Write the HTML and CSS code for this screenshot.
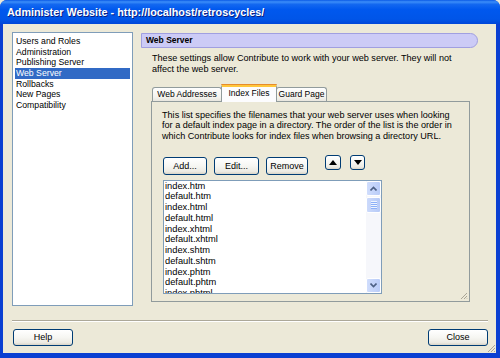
FILE: index.html
```html
<!DOCTYPE html>
<html>
<head>
<meta charset="utf-8">
<title>Administer Website</title>
<link rel="stylesheet" href="styles.css">
</head>
<body>
<div class="window">
  <div class="titlebar"><span class="title">Administer Website - http://localhost/retroscycles/</span></div>
  <div class="client">
    <div class="main">
      <ul class="categories">
        <li>Users and Roles</li>
        <li>Administration</li>
        <li>Publishing Server</li>
        <li class="selected">Web Server</li>
        <li>Rollbacks</li>
        <li>New Pages</li>
        <li>Compatibility</li>
      </ul>
      <div class="content">
        <div class="section-header">Web Server</div>
        <p class="desc">These settings allow Contribute to work with your web server. They will not<br>affect the web server.</p>
        <div class="tabs">
          <div class="tab tab-web">Web Addresses</div>
          <div class="tab tab-index active">Index Files</div>
          <div class="tab tab-guard">Guard Page</div>
        </div>
        <div class="tab-panel">
          <p class="panel-text">This list specifies the filenames that your web server uses when looking<br>for a default index page in a directory. The order of the list is the order in<br>which Contribute looks for index files when browsing a directory URL.</p>
          <div class="toolbar">
            <button class="btn btn-add">Add...</button>
            <button class="btn btn-edit">Edit...</button>
            <button class="btn btn-remove">Remove</button>
            <button class="btn arrow arrow-up" aria-label="Move up"><svg width="8" height="5" viewBox="0 0 8 5"><path d="M0 5 L4 0 L8 5 Z" fill="#000"/></svg></button>
            <button class="btn arrow arrow-down" aria-label="Move down"><svg width="8" height="5" viewBox="0 0 8 5"><path d="M0 0 L8 0 L4 5 Z" fill="#000"/></svg></button>
          </div>
          <div class="filelist">
            <ul class="files">
              <li>index.htm</li>
              <li>default.htm</li>
              <li>index.html</li>
              <li>default.html</li>
              <li>index.xhtml</li>
              <li>default.xhtml</li>
              <li>index.shtm</li>
              <li>default.shtm</li>
              <li>index.phtm</li>
              <li>default.phtm</li>
              <li>index.phtml</li>
              <li>default.phtml</li>
            </ul>
            <div class="scrollbar">
              <div class="sb-btn"><svg width="7" height="5" viewBox="0 0 7 5"><path d="M0.5 4.5 L3.5 1.5 L6.5 4.5" fill="none" stroke="#4D6185" stroke-width="1.6"/></svg></div>
              <div class="sb-thumb"><span></span><span></span><span></span><span></span></div>
              <div class="sb-track"></div>
              <div class="sb-btn"><svg width="7" height="5" viewBox="0 0 7 5"><path d="M0.5 0.5 L3.5 3.5 L6.5 0.5" fill="none" stroke="#4D6185" stroke-width="1.6"/></svg></div>
            </div>
          </div>
          <svg class="grip panel-grip" width="8" height="8" viewBox="0 0 8 8"><path d="M7 1 L1 7 M7 4 L4 7 M7 6.5 L6.5 7" stroke="#A9A596" stroke-width="1"/></svg>
        </div>
      </div>
    </div>
    <div class="separator"></div>
    <div class="footer">
      <button class="btn btn-footer">Help</button>
      <button class="btn btn-footer">Close</button>
    </div>
    <svg class="grip window-grip" width="9" height="9" viewBox="0 0 9 9"><path d="M8 1 L1 8 M8 4 L4 8 M8 7 L7 8" stroke="#A9A596" stroke-width="1"/></svg>
  </div>
</div>
</body>
</html>
```

FILE: styles.css
```css
* { box-sizing: border-box; }
html, body { margin: 0; padding: 0; }
body {
  width: 500px;
  height: 358px;
  overflow: hidden;
  background: #ECE9D8;
  font-family: "Liberation Sans", Arial, sans-serif;
  font-size: 8.5px;
  color: #000;
}
ul { list-style: none; margin: 0; padding: 0; }
p { margin: 0; }

.window {
  width: 500px;
  height: 358px;
  display: flex;
  flex-direction: column;
  background: #0A3FD2;
  border-radius: 7px 7px 0 0;
  padding: 0 4px 5px 3px;
}
.titlebar {
  height: 24px;
  margin: 0 -4px 0 -3px;
  border-radius: 7px 7px 0 0;
  background: linear-gradient(#0A5AE6 0%, #3C8EF9 8%, #1368F0 18%, #0058EE 40%, #0055E8 80%, #0046D8 100%);
  display: flex;
  align-items: center;
  padding-left: 7px;
}
.title {
  color: #fff;
  font-weight: bold;
  font-size: 10.8px;
  text-shadow: 1px 1px 0 #0A1E80;
}

.client {
  position: relative;
  flex: 1;
  background: #ECE9D8;
  padding: 8px 8px 0 9px;
  display: flex;
  flex-direction: column;
}
.main {
  height: 274px;
  display: flex;
  gap: 8px;
}
.categories {
  width: 121px;
  height: 274px;
  background: #fff;
  border: 1px solid #7F9DB9;
  padding: 3px 2px 0 2px;
  font-size: 8.7px;
}
.categories li {
  line-height: 10.67px;
  height: 10.67px;
  padding-left: 1px;
}
.categories li.selected {
  background: #316AC5;
  color: #fff;
}

.content {
  width: 337px;
  display: flex;
  flex-direction: column;
}
.section-header {
  margin-top: 1px;
  height: 15px;
  background: #CCCBF6;
  border: 1px solid #A09FE0;
  border-radius: 0 8px 8px 0;
  font-weight: bold;
  padding-left: 4px;
  line-height: 13px;
}
.desc {
  margin: 4.5px 0 0 11px;
  line-height: 11px;
  font-size: 9.1px;
}

.tabs {
  margin: 9.5px 0 0 11px;
  height: 17px;
  display: flex;
  align-items: flex-end;
  position: relative;
  z-index: 1;
}
.tab {
  height: 14px;
  border: 1px solid #919B9C;
  border-bottom: none;
  border-radius: 3px 3px 0 0;
  background: linear-gradient(#FEFEFE, #F4F3EE 70%, #E8E6DE);
  text-align: center;
  line-height: 13px;
}
.tab-web { width: 70px; }
.tab-index { width: 56px; margin-left: -1px; }
.tab-guard { width: 51px; margin-left: -1px; }
.tab.active {
  height: 18px;
  margin-bottom: -1px;
  background: #FCFCFE;
  border-top: 3px solid #FFC73C;
  position: relative;
  line-height: 12px;
  z-index: 2;
}
.tab.active::before {
  content: "";
  position: absolute;
  left: -1px;
  right: -1px;
  top: -3px;
  height: 1px;
  background: #E68B2C;
  border-radius: 3px 3px 0 0;
}

.tab-panel {
  position: relative;
  margin-left: 10px;
  width: 319px;
  height: 201px;
  border: 1px solid #919B9C;
  background: #ECE9D8;
  padding: 7.5px 0 0 10px;
}
.panel-text {
  line-height: 10.7px;
  font-size: 9.1px;
}
.toolbar {
  margin-top: 15px;
  display: flex;
  align-items: flex-start;
  padding-left: 1px;
  height: 18px;
}
.btn {
  font-family: inherit;
  font-size: 9px;
  color: #000;
  border: 1px solid #003C74;
  border-radius: 3px;
  background: linear-gradient(#FFFFFF 0%, #F6F6F2 50%, #ECEAE2 85%, #D8D3C6 100%);
  padding: 0;
  margin: 0;
  height: 18px;
  text-align: center;
  line-height: 16px;
}
.btn-add { width: 44px; }
.btn-edit { width: 45px; margin-left: 7px; }
.btn-remove { width: 42px; margin-left: 7px; }
.arrow {
  width: 16px;
  height: 15px;
  margin-top: -2px;
  display: flex;
  align-items: center;
  justify-content: center;
}
.arrow-up { margin-left: 17px; }
.arrow-down { margin-left: 9px; width: 15px; }

.filelist {
  margin-top: 5px;
  margin-left: 1px;
  width: 219px;
  height: 114px;
  border: 1px solid #7F9DB9;
  background: #fff;
  display: flex;
  overflow: hidden;
}
.files {
  flex: 1;
  padding: 0 0 0 1px;
  overflow: hidden;
  font-size: 9.3px;
}
.files li {
  line-height: 10.75px;
  height: 10.75px;
}
.scrollbar {
  width: 15px;
  background: #F6F7FB;
  display: flex;
  flex-direction: column;
}
.sb-btn {
  height: 15px;
  border: 1px solid #fff;
  border-radius: 2px;
  background: linear-gradient(90deg, #D0DDFC, #B9CCF8);
  display: flex;
  align-items: center;
  justify-content: center;
}
.sb-thumb {
  height: 16px;
  margin-top: 1px;
  border: 1px solid #fff;
  border-radius: 2px;
  background: linear-gradient(90deg, #CCDAFB, #B6CAF7);
  display: flex;
  flex-direction: column;
  align-items: center;
  justify-content: center;
  gap: 1px;
}
.sb-thumb span {
  width: 6px;
  height: 1px;
  background: #EEF4FE;
  box-shadow: 0 1px 0 #8CB0F8;
}
.sb-track { flex: 1; }

.grip { position: absolute; }
.panel-grip { right: 1px; bottom: 1px; }
.window-grip { right: 0; bottom: 0; }

.separator {
  margin-top: 14px;
  height: 2px;
  border-top: 1px solid #ACA899;
  border-bottom: 1px solid #fff;
}
.footer {
  margin-top: 7px;
  display: flex;
  justify-content: space-between;
  padding-left: 1px;
}
.btn-footer {
  width: 60px;
  height: 17px;
  line-height: 15px;
}
```
